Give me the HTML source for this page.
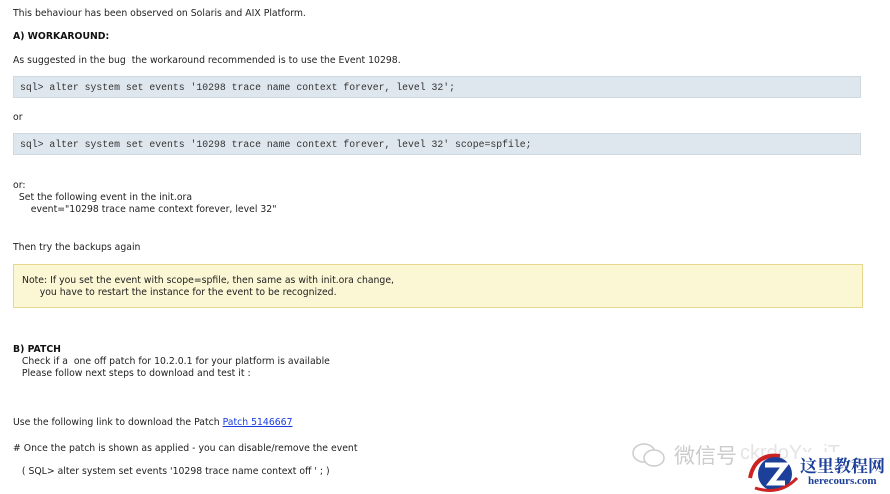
<!DOCTYPE html>
<html><head><meta charset="utf-8"><style>
html,body{margin:0;padding:0;background:#fff;width:890px;height:494px;overflow:hidden;position:relative}
body{font-family:"DejaVu Sans","Liberation Sans",sans-serif;font-size:9.3px;color:#222}
.t{position:absolute;left:13px;white-space:pre;line-height:12px}
.code{position:absolute;left:13px;width:848px;height:22px;background:#dfe7ee;border:1px solid #cfd9e2;font-family:"Liberation Mono",monospace;font-size:9.8px;line-height:21px;color:#333;box-sizing:border-box;padding-left:6px;white-space:pre}
.note{position:absolute;left:13px;top:264px;width:850px;height:44px;background:#fbf6d4;border:1px solid #e6d98e;box-sizing:border-box}
a{color:#1a3ee0;text-decoration:underline}
</style></head><body>
<div class="t" style="top:8px">This behaviour has been observed on Solaris and AIX Platform.</div>
<div class="t" style="top:31px;font-weight:bold;color:#111">A) WORKAROUND:</div>
<div class="t" style="top:55px">As suggested in the bug  the workaround recommended is to use the Event 10298.</div>
<div class="code" style="top:76px">sql&gt; alter system set events '10298 trace name context forever, level 32';</div>
<div class="t" style="top:112px">or</div>
<div class="code" style="top:133px">sql&gt; alter system set events '10298 trace name context forever, level 32' scope=spfile;</div>
<div class="t" style="top:180px">or:
  Set the following event in the init.ora
      event="10298 trace name context forever, level 32"</div>
<div class="t" style="top:242px">Then try the backups again</div>
<div class="note"></div>
<div class="t" style="top:275px;left:22px">Note: If you set the event with scope=spfile, then same as with init.ora change,
      you have to restart the instance for the event to be recognized.</div>
<div class="t" style="top:344px"><b style="color:#111">B) PATCH</b>
   Check if a  one off patch for 10.2.0.1 for your platform is available
   Please follow next steps to download and test it :</div>
<div class="t" style="top:417px">Use the following link to download the Patch <a>Patch 5146667</a></div>
<div class="t" style="top:443px"># Once the patch is shown as applied - you can disable/remove the event</div>
<div class="t" style="top:466px">   ( SQL&gt; alter system set events '10298 trace name context off ' ; )</div>
<svg style="position:absolute;left:630px;top:440px" width="40" height="30"><ellipse cx="14" cy="13" rx="11" ry="9" fill="none" stroke="#ccc" stroke-width="1.5"/><ellipse cx="24" cy="18" rx="10" ry="8" fill="#fff" stroke="#ccc" stroke-width="1.5"/></svg>
<div style="position:absolute;left:674px;top:440px;font-family:'Noto Sans CJK SC',sans-serif;font-size:21px;color:#ccc">微信号</div>
<div style="position:absolute;left:740px;top:442px;font-family:'Liberation Sans',sans-serif;font-size:20px;color:#e4e4e4">ckrdoYx..iT</div>
<svg style="position:absolute;left:745px;top:448px" width="55" height="46"><path d="M5 30 Q10 5 35 8" fill="none" stroke="#c22" stroke-width="4"/><circle cx="30" cy="26" r="17" fill="#1c3f9a"/><path d="M20 17h20l-14 18h14" fill="none" stroke="#fff" stroke-width="5"/><path d="M10 40 Q35 48 52 30" fill="none" stroke="#c22" stroke-width="3"/></svg>
<div style="position:absolute;left:800px;top:452px;font-family:'Noto Serif CJK SC',serif;font-weight:bold;font-size:17px;color:#1c3f9a;background:#fff">这里教程网</div>
<div style="position:absolute;left:808px;top:475px;font-family:'Liberation Serif',serif;font-weight:bold;font-size:11px;color:#1c3f9a">herecours.com</div>
</body></html>
